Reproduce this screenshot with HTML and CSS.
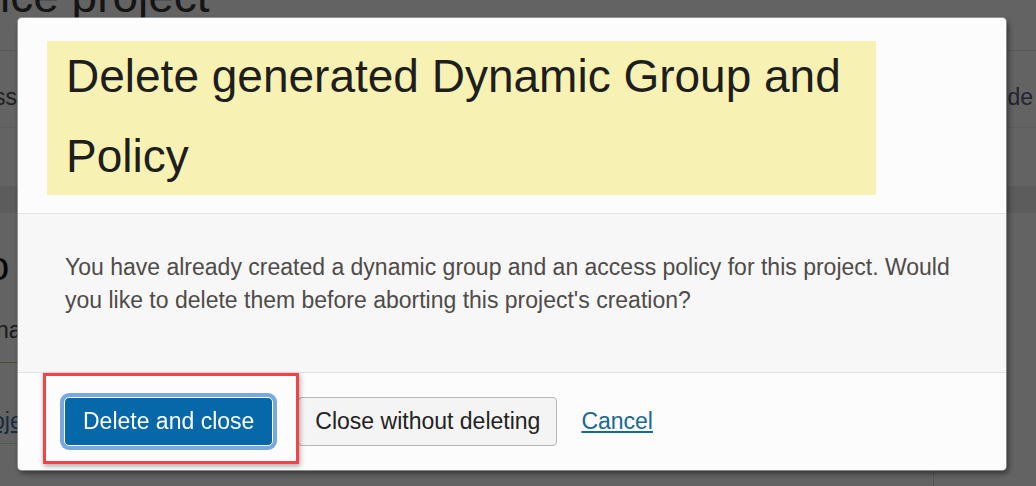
FILE: index.html
```html
<!DOCTYPE html>
<html lang="en">
<head>
<meta charset="utf-8">
<title>Delete generated Dynamic Group and Policy</title>
<link rel="stylesheet" href="styles.css">
</head>
<body>
<div class="page">
  <h1 class="page-title">ice project</h1>
  <div class="tabs">
    <span class="tab">ss</span>
    <span class="tab tab-right">de</span>
  </div>
  <div class="toolbar"></div>
  <div class="band"></div>
  <div class="content">
    <div class="main">
      <div class="sec-title">o</div>
      <div class="sec-label">na</div>
      <div class="sec-row"><a class="sec-link" href="#">oje</a></div>
    </div>
    <div class="aside"></div>
  </div>
</div>

<div class="overlay"></div>

<div class="dialog" role="dialog" aria-labelledby="dlg-title">
  <div class="dialog-header">
    <h2 class="dialog-title" id="dlg-title"><span class="dialog-title-text">Delete generated Dynamic Group and Policy</span></h2>
  </div>
  <div class="dialog-body">
    <p class="dialog-text">You have already created a dynamic group and an access policy for this project. Would you like to delete them before aborting this project's creation?</p>
  </div>
  <div class="dialog-footer">
    <span class="annotation"></span>
    <button class="btn btn-primary" type="button">Delete and close</button>
    <button class="btn btn-secondary" type="button">Close without deleting</button>
    <a class="link-cancel" href="#">Cancel</a>
  </div>
</div>
</body>
</html>
```

FILE: styles.css
```css
html, body {
  margin: 0;
  padding: 0;
  height: 100%;
  overflow: hidden;
}

body {
  background: #ffffff;
  font-family: "Liberation Sans", Arial, sans-serif;
  color: #333333;
}

/* ---------- background page ---------- */
.page {
  display: flex;
  flex-direction: column;
  height: 100%;
}

.page-title {
  flex: none;
  margin: -27px 0 0 0;
  font-size: 46px;
  line-height: 46px;
  font-weight: normal;
  color: #383838;
  height: 78px;
  box-sizing: border-box;
  border-bottom: 1px solid #e2e2e2;
}

.tabs {
  flex: none;
  display: flex;
  justify-content: space-between;
  align-items: flex-start;
  height: 77px;
  box-sizing: border-box;
  padding-top: 31px;
  border-bottom: 1px solid #ececec;
  font-size: 23px;
  line-height: 30px;
}

.tab {
  margin-left: -6px;
  color: #555555;
}

.tab-right {
  margin-left: 0;
  margin-right: 3px;
  color: #5a5a78;
}

.toolbar {
  flex: none;
  height: 59px;
  box-sizing: border-box;
  border-bottom: 1px solid #f0f0f0;
}

.band {
  flex: none;
  height: 26px;
  background: #ededed;
}

.content {
  flex: 1;
  display: flex;
}

.main {
  width: 933px;
  display: flex;
  flex-direction: column;
}

.sec-title {
  margin-top: 30px;
  margin-left: -13px;
  font-size: 40px;
  line-height: 46px;
  color: #111111;
}

.sec-label {
  margin-top: 26px;
  margin-left: -4px;
  font-size: 23px;
  line-height: 30px;
  color: #444444;
}

.sec-row {
  margin-top: 17px;
  height: 82px;
  box-sizing: border-box;
  padding-top: 43px;
  border-top: 1px solid #b9d08a;
  border-bottom: 1px solid #e0e0c8;
  margin-left: -8px;
  font-size: 23px;
  line-height: 30px;
}

.sec-link {
  color: #3a6ea8;
  text-decoration: underline;
}

.aside {
  flex: 1;
  border-left: 1px solid #d8d8d8;
}

.overlay {
  position: fixed;
  inset: 0;
  background: rgba(0, 0, 0, 0.61);
}

/* ---------- dialog ---------- */
.dialog {
  position: fixed;
  left: 18px;
  top: 18px;
  width: 988px;
  height: 452px;
  display: flex;
  flex-direction: column;
  background: #fcfcfc;
  border-radius: 4px;
  box-shadow: 0 0 0 1px rgba(180, 188, 196, 0.6), 2px 3px 6px rgba(0, 0, 0, 0.55);
  overflow: hidden;
}

.dialog-header {
  padding: 23px 0 18px 29px;
  border-bottom: 1px solid #e3e3e3;
}

.dialog-title {
  display: flow-root;
  margin: 0;
  width: 829px;
  height: 154px;
  box-sizing: border-box;
  padding-left: 19px;
  background: #f7f2b3;
  font-size: 46px;
  font-weight: normal;
  line-height: 80px;
  color: #1e1e1e;
}

.dialog-title-text {
  display: block;
  margin-top: -5px;
}

.dialog-body {
  flex: 1;
  background: #f7f7f7;
  padding: 37px 47px 0 47px;
}

.dialog-text {
  margin: 0;
  font-size: 23px;
  line-height: 33px;
  color: #4e4b48;
}

.dialog-footer {
  position: relative;
  display: flex;
  align-items: center;
  gap: 25px;
  padding: 24px 47px 24px 46px;
  border-top: 1px solid #e3e3e3;
  background: #fcfcfc;
}

.annotation {
  position: absolute;
  left: 25px;
  top: 0;
  width: 256px;
  height: 91px;
  box-sizing: border-box;
  border: 3px solid #f2434a;
  box-shadow: 1px 2px 5px rgba(0, 0, 0, 0.35);
  pointer-events: none;
}

.btn {
  height: 49px;
  box-sizing: border-box;
  font-family: "Liberation Sans", Arial, sans-serif;
  font-size: 23px;
  border-radius: 4px;
  cursor: pointer;
}

.btn-primary {
  position: relative;
  padding: 0 18px;
  background: #0768a9;
  color: #ffffff;
  border: 1px solid #ffffff;
  border-radius: 5px;
  box-shadow: 0 0 0 4px #78a8e0;
}

.btn-secondary {
  padding: 0 16px;
  background: #f4f4f4;
  color: #222222;
  border: 1px solid #b7b7b7;
}

.link-cancel {
  margin-left: -1px;
  font-size: 23px;
  color: #186a8f;
  text-decoration: underline;
}
```
